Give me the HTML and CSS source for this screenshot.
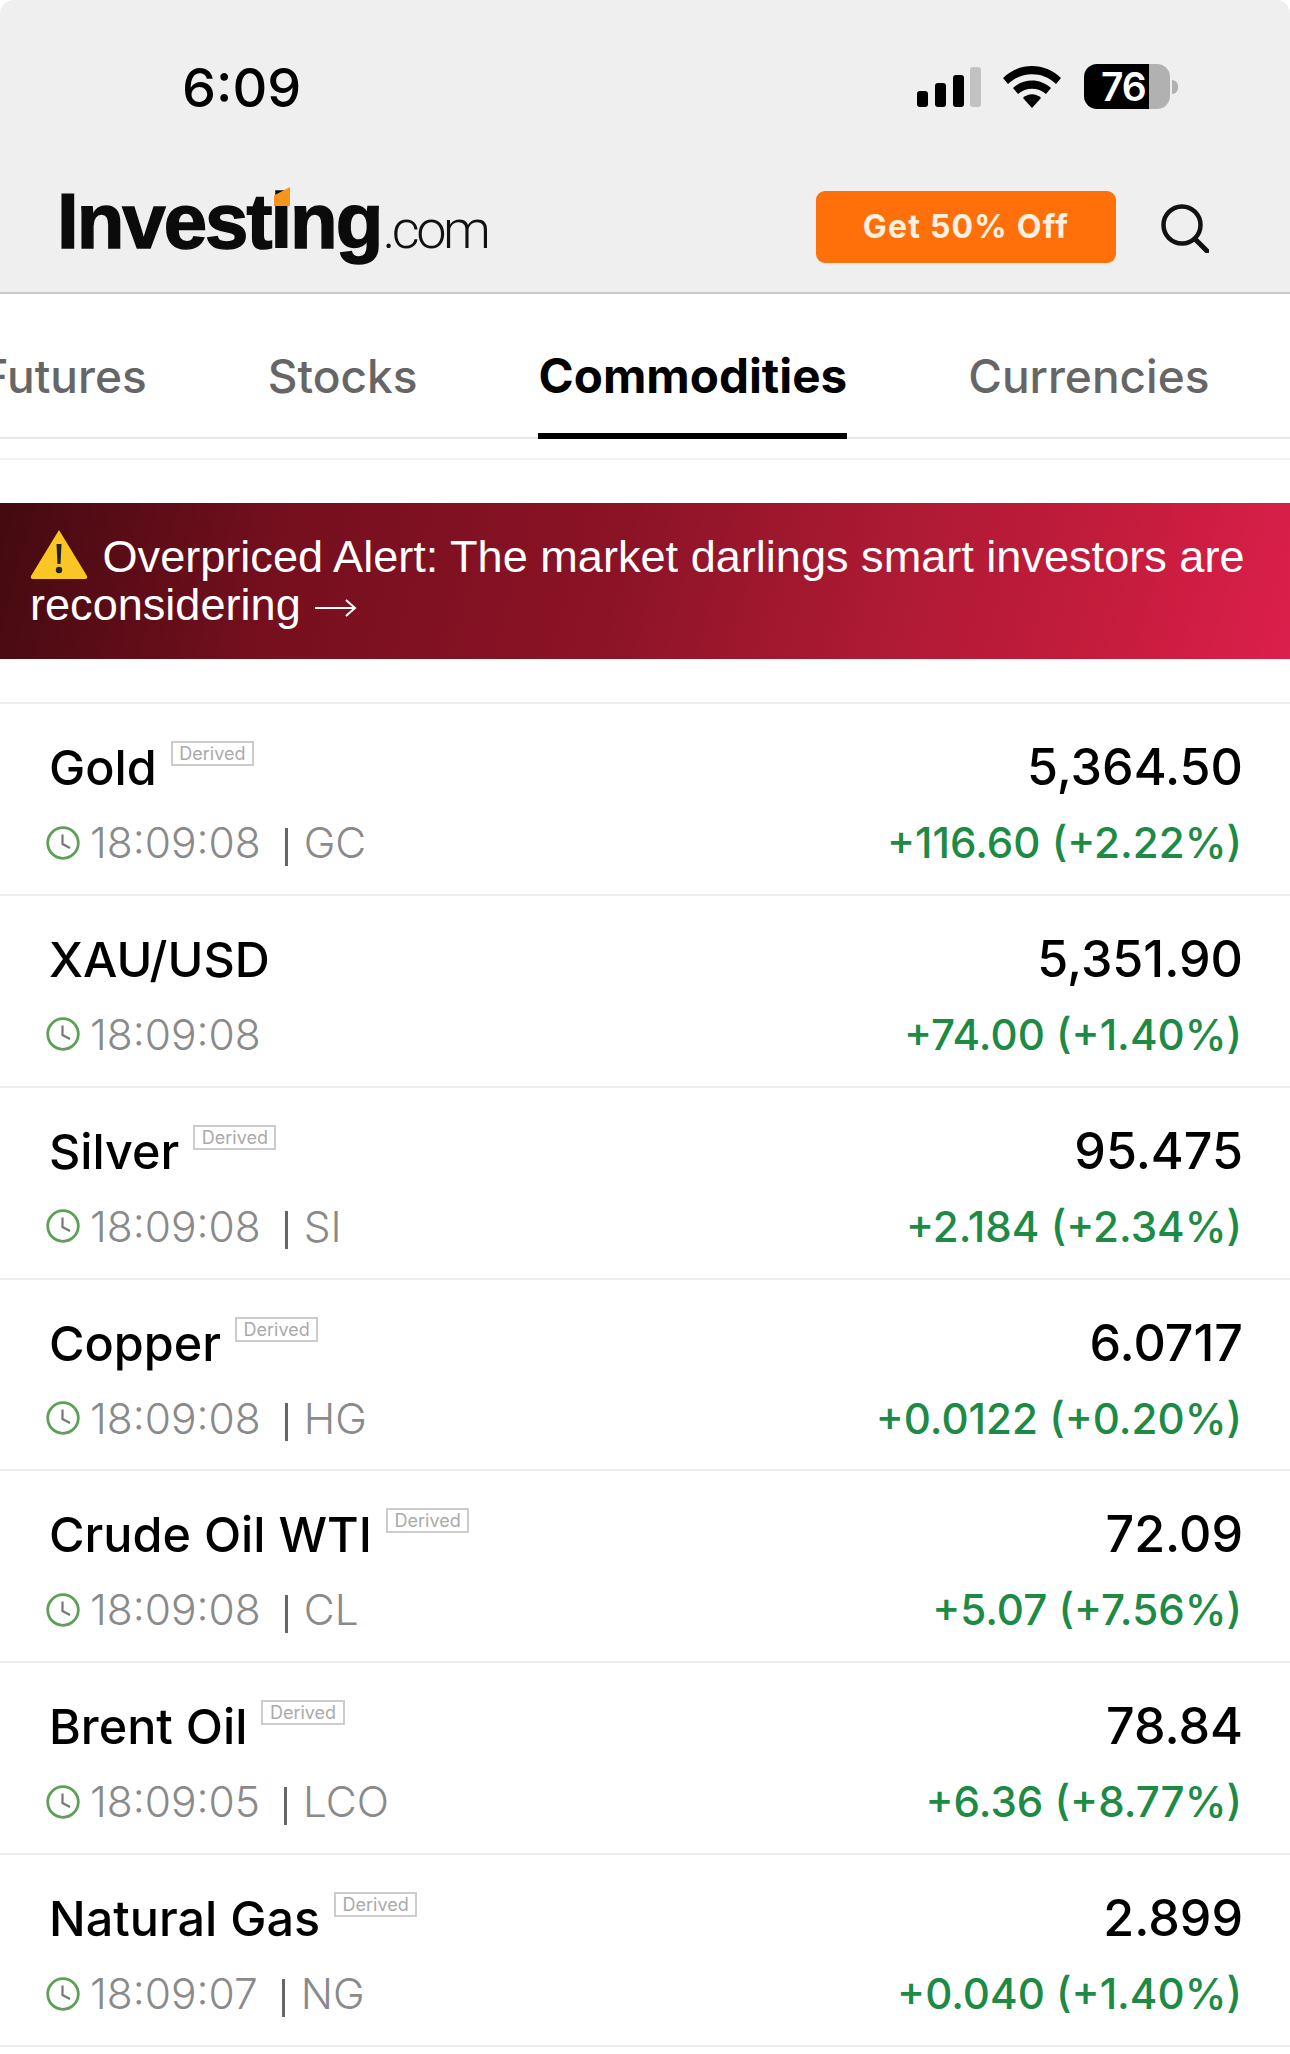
FILE: index.html

```html
<!DOCTYPE html>
<html lang="en">
<head>
  <meta charset="UTF-8" />
  <meta name="viewport" content="width=device-width, initial-scale=1.0"/>
  <title>Investing.com - Commodities</title>
  <link rel="stylesheet" href="styles.css">
</head>
<body>

<svg class="defs" width="0" height="0">
  <symbol id="clock" viewBox="0 0 34 34">
    <circle cx="17" cy="17" r="15.300" fill="none" stroke="#5d9f55" stroke-width="2.800"/>
    <path d="M16.500 8.500v9.500l7.500 4" fill="none" stroke="#777" stroke-width="2.200"/>
  </symbol>
</svg>

<header class="top">
  <div class="status">
    <span class="clock-time">6:09</span>
    <div class="status-icons">
      <svg class="signal" width="64" height="40" viewBox="0 0 64 40">
        <rect x="0" y="24" width="11" height="16" rx="3" fill="#000"/>
        <rect x="18" y="16" width="11" height="24" rx="3" fill="#000"/>
        <rect x="36" y="8" width="11" height="32" rx="3" fill="#000"/>
        <rect x="53" y="0" width="11" height="40" rx="3" fill="#c2c2c2"/>
      </svg>
      <svg class="wifi" width="58" height="42" viewBox="0 0 58 42">
        <path d="M0 12C16-4 42-4 58 12l-5 6C40 5 18 5 5 18z" fill="#000"/>
        <path d="M10 22c11-10 27-10 38 0l-5 6c-8-7-20-7-28 0z" fill="#000"/>
        <path d="M20 32c5-5 13-5 18 0L29 42z" fill="#000"/>
      </svg>
      <div class="battery">
        <div class="battery-body"><span class="battery-level">76</span></div>
        <div class="battery-nub"></div>
      </div>
    </div>
  </div>
  <div class="brand-bar">
    <div class="logo">
      <span class="logo-main">Investing</span><span class="logo-dot">.com</span>
      <span class="logo-mark"></span>
    </div>
    <a class="offer">Get 50% Off</a>
    <svg class="search" width="48" height="50" viewBox="0 0 48 50">
      <circle cx="21" cy="22" r="18.500" fill="none" stroke="#111" stroke-width="4.500"/>
      <path d="M34 36l12 12" fill="none" stroke="#111" stroke-width="5" stroke-linecap="round"/>
    </svg>
  </div>
</header>

<nav class="tabs">
  <a class="tab">Futures</a>
  <a class="tab">Stocks</a>
  <a class="tab active">Commodities</a>
  <a class="tab">Currencies</a>
</nav>
<div class="sub-line"></div>

<div class="alert">
  <svg class="warn" width="58" height="50" viewBox="0 0 58 50">
    <path d="M29 1L57 47q1 3-2 3H3q-3 0-2-3z" fill="#f9c623"/>
    <path d="M26.500 15h5l-1 20h-3z" fill="#222"/>
    <circle cx="29" cy="41" r="3.200" fill="#222"/>
  </svg>
  Overpriced Alert: The market darlings smart investors are reconsidering
  <svg class="arrow" width="42" height="20" viewBox="0 0 42 20">
    <path d="M0 10h40M31 2l9 8-9 8" fill="none" stroke="#fff" stroke-width="2"/>
  </svg>
</div>

<main class="list">
  <div class="row">
    <div class="name-line"><span class="name">Gold</span><span class="badge">Derived</span></div>
    <div class="price">5,364.50</div>
    <div class="time-line"><svg class="clock"><use href="#clock"/></svg><span>18:09:08</span><span class="sep"></span><span>GC</span></div>
    <div class="change">+116.60 (+2.22%)</div>
  </div>
  <div class="row">
    <div class="name-line"><span class="name">XAU/USD</span></div>
    <div class="price">5,351.90</div>
    <div class="time-line"><svg class="clock"><use href="#clock"/></svg><span>18:09:08</span></div>
    <div class="change">+74.00 (+1.40%)</div>
  </div>
  <div class="row">
    <div class="name-line"><span class="name">Silver</span><span class="badge">Derived</span></div>
    <div class="price">95.475</div>
    <div class="time-line"><svg class="clock"><use href="#clock"/></svg><span>18:09:08</span><span class="sep"></span><span>SI</span></div>
    <div class="change">+2.184 (+2.34%)</div>
  </div>
  <div class="row">
    <div class="name-line"><span class="name">Copper</span><span class="badge">Derived</span></div>
    <div class="price">6.0717</div>
    <div class="time-line"><svg class="clock"><use href="#clock"/></svg><span>18:09:08</span><span class="sep"></span><span>HG</span></div>
    <div class="change">+0.0122 (+0.20%)</div>
  </div>
  <div class="row">
    <div class="name-line"><span class="name">Crude Oil WTI</span><span class="badge">Derived</span></div>
    <div class="price">72.09</div>
    <div class="time-line"><svg class="clock"><use href="#clock"/></svg><span>18:09:08</span><span class="sep"></span><span>CL</span></div>
    <div class="change">+5.07 (+7.56%)</div>
  </div>
  <div class="row">
    <div class="name-line"><span class="name">Brent Oil</span><span class="badge">Derived</span></div>
    <div class="price">78.84</div>
    <div class="time-line"><svg class="clock"><use href="#clock"/></svg><span>18:09:05</span><span class="sep"></span><span>LCO</span></div>
    <div class="change">+6.36 (+8.77%)</div>
  </div>
  <div class="row">
    <div class="name-line"><span class="name">Natural Gas</span><span class="badge">Derived</span></div>
    <div class="price">2.899</div>
    <div class="time-line"><svg class="clock"><use href="#clock"/></svg><span>18:09:07</span><span class="sep"></span><span>NG</span></div>
    <div class="change">+0.040 (+1.40%)</div>
  </div>
</main>

</body>
</html>
```

FILE: styles.css

```css
* { box-sizing: border-box; }
html, body { margin: 0; height: 2054px; overflow: hidden; background: #fff; }
body { font-family: Inter, "Liberation Sans", sans-serif; color: #000; }
.defs { display: block; height: 0; }

/* top grey part */
.top { height: 294px; background: #efefef; border-bottom: 2px solid #c9c9c9; border-radius: 14px 14px 0 0; }
.status { height: 128px; display: flex; align-items: flex-start; padding: 58px 0 0 182px; }
.clock-time { font-size: 54px; font-weight: 500; line-height: 60px; }
.status-icons { margin-left: auto; padding-right: 112px; display: flex; align-items: flex-start; }
.signal { margin: 9px 0 0 0; }
.wifi { margin: 8px 0 0 22px; }
.battery { margin: 6px 0 0 23px; display: flex; align-items: center; }
.battery-body { width: 86px; height: 45px; border-radius: 13px; background: linear-gradient(90deg, #000 0 65px, #b1b1b1 65px); overflow: hidden; }
.battery-level { display: block; width: 65px; padding-left: 17px; color: #fff; font-size: 39px; font-weight: 600; line-height: 45px; letter-spacing: -1px; }
.battery-nub { width: 6px; height: 14px; margin-left: 2px; background: #b1b1b1; border-radius: 0 6px 6px 0; }

.brand-bar { height: 164px; display: flex; align-items: flex-start; padding-left: 57px; }
.logo { position: relative; margin-top: 51px; display: flex; align-items: baseline; height: 92px; line-height: 84px; }
.logo-main { font-family: "Liberation Sans", sans-serif; font-size: 78px; font-weight: 700; letter-spacing: -2px; color: #0b0b0b; -webkit-text-stroke: 1.500px #0b0b0b; }
.logo-dot { margin-left: 1px; font-family: Roboto, sans-serif; font-size: 54px; font-weight: 300; letter-spacing: -3.500px; color: #111; }
.logo-mark { position: absolute; left: 217px; top: 8px; width: 16px; height: 19px; background: #f7941d; clip-path: polygon(0 45%, 100% 0, 100% 100%, 0 100%); }
.offer { margin: 63px 0 0 auto; width: 300px; height: 72px; border-radius: 9px; background: #ff6f0a; color: #fff1e0; font-size: 32px; font-weight: 700; letter-spacing: 1.200px; line-height: 72px; text-align: center; }
.search { margin: 75px 81px 0 45px; }

/* tabs */
.tabs { height: 145px; display: flex; justify-content: flex-end; padding-right: 20px; overflow: hidden; box-shadow: inset 0 -2px 0 #e6e6e6; }
.tab { flex: none; margin: 0 60.500px; height: 145px; padding-top: 53px; font-size: 46px; font-weight: 500; line-height: 58px; color: #666; }
.tab.active { font-size: 47.600px; font-weight: 700; color: #000; border-bottom: 6px solid #000; }
.sub-line { height: 21px; border-bottom: 2px solid #f1f1f1; }

/* alert */
.alert { margin-top: 43px; height: 156px; padding: 26px 30px 0; background: linear-gradient(105deg, #430a10 0%, #750f1e 22%, #8c1326 48%, #ad1a33 68%, #c41c3c 85%, #dc1f4c 100%); color: #fff; font-family: "Liberation Sans", sans-serif; font-size: 45.100px; line-height: 48px; }
.warn { vertical-align: -7px; margin-right: 2px; }
.arrow { vertical-align: 2px; margin-left: 2px; }

/* quotes */
.list { margin-top: 43px; border-top: 2px solid #eee; }
.row { height: 191.850px; padding: 34px 47px 0 49px; display: grid; grid-template-columns: 1fr auto; grid-template-rows: 60px 62px; row-gap: 13px; border-bottom: 2px solid #eee; }
.name-line { display: flex; align-items: flex-start; }
.name { font-size: 48.500px; font-weight: 450; line-height: 60px; }
.badge { margin: 3px 0 0 14px; height: 25px; padding: 0 6.500px; border: 2px solid #ccc; color: #aaa; font-size: 18px; line-height: 21px; }
.price { font-size: 50.200px; font-weight: 450; line-height: 58px; text-align: right; }
.time-line { display: flex; align-items: center; margin-left: -3px; padding-top: 1px; color: #8a8a8a; font-size: 42.500px; font-weight: 300; }
.clock { width: 34px; height: 34px; margin-right: 10px; }
.sep { width: 3px; height: 38px; margin: 8px 16px 0 24px; background: #666; }
.change { font-size: 42.100px; font-weight: 450; line-height: 64px; text-align: right; color: #1d8a45; margin-right: 1px; }
```
